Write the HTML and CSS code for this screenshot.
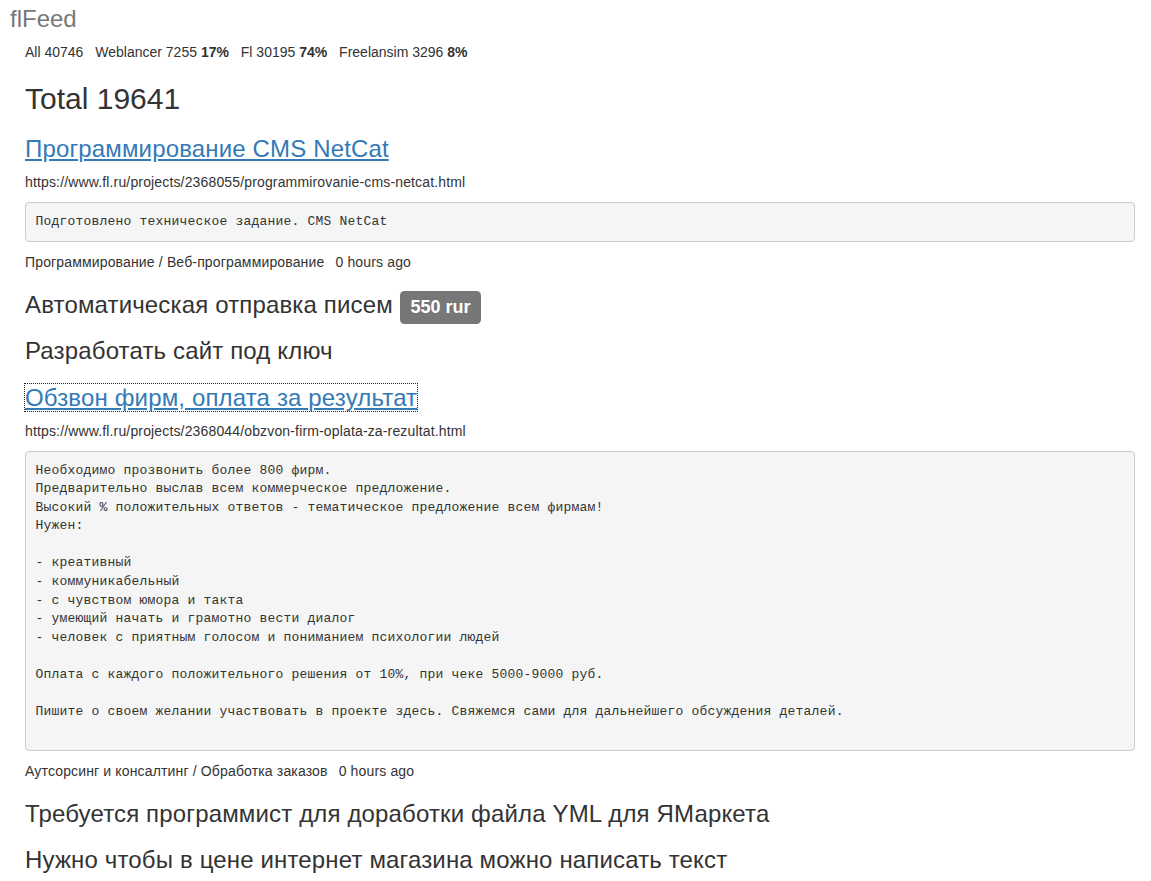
FILE: index.html
```html
<!DOCTYPE html>
<html lang="ru">
<head>
<meta charset="utf-8">
<title>flFeed</title>
<link rel="stylesheet" href="styles.css">
</head>
<body>
<header class="brand">flFeed</header>
<main class="page">
  <div class="stats">
    <span class="stat">All 40746</span>
    <span class="stat">Weblancer 7255 <b>17%</b></span>
    <span class="stat">Fl 30195 <b>74%</b></span>
    <span class="stat">Freelansim 3296 <b>8%</b></span>
  </div>
  <h2 class="total">Total 19641</h2>

  <article class="job">
    <h3 class="job-title"><a class="job-link" href="#">Программирование CMS NetCat</a></h3>
    <p class="job-url">https://www.fl.ru/projects/2368055/programmirovanie-cms-netcat.html</p>
    <pre class="job-desc">Подготовлено техническое задание. CMS NetCat</pre>
    <p class="job-meta"><span class="job-cat">Программирование / Веб-программирование</span><span class="job-time">0 hours ago</span></p>
  </article>

  <h3 class="job-title">Автоматическая отправка писем <span class="price">550 rur</span></h3>

  <h3 class="job-title">Разработать сайт под ключ</h3>

  <article class="job">
    <h3 class="job-title"><a class="job-link focused" href="#">Обзвон фирм, оплата за результат</a></h3>
    <p class="job-url">https://www.fl.ru/projects/2368044/obzvon-firm-oplata-za-rezultat.html</p>
    <pre class="job-desc">Необходимо прозвонить более 800 фирм.
Предварительно выслав всем коммерческое предложение.
Высокий % положительных ответов - тематическое предложение всем фирмам!
Нужен:

- креативный
- коммуникабельный
- с чувством юмора и такта
- умеющий начать и грамотно вести диалог
- человек с приятным голосом и пониманием психологии людей

Оплата с каждого положительного решения от 10%, при чеке 5000-9000 руб.

Пишите о своем желании участвовать в проекте здесь. Свяжемся сами для дальнейшего обсуждения деталей.

</pre>
    <p class="job-meta"><span class="job-cat">Аутсорсинг и консалтинг / Обработка заказов</span><span class="job-time">0 hours ago</span></p>
  </article>

  <h3 class="job-title">Требуется программист для доработки файла YML для ЯМаркета</h3>

  <h3 class="job-title">Нужно чтобы в цене интернет магазина можно написать текст</h3>
</main>
</body>
</html>
```

FILE: styles.css
```css
html, body {
  margin: 0;
  padding: 0;
}

body {
  font-family: "Liberation Sans", Arial, "Helvetica Neue", sans-serif;
  font-size: 14px;
  line-height: 1.42857;
  color: #333;
  background: #fff;
}

.brand {
  padding: 5px 10px 0;
  font-size: 24px;
  line-height: 27px;
  color: #777;
}

.page {
  padding: 0 16px 0 25px;
}

.stats {
  margin-top: 10px;
  line-height: 20px;
}

.stat {
  margin-right: 8px;
}

.stat b {
  font-weight: bold;
}

.total {
  margin: 20px 0 21px;
  font-size: 30px;
  font-weight: 500;
  line-height: 1.1;
}

.job-title {
  margin: 20px 0 10px;
  font-size: 24px;
  font-weight: 500;
  line-height: 1.1;
  letter-spacing: 0.15px;
}

.job-link {
  color: #337ab7;
  text-decoration: underline;
}

.job-link.focused {
  outline: 1px dotted #212121;
}

.job-url {
  margin: 0 0 10px;
  line-height: 20px;
  letter-spacing: 0.15px;
}

.job-desc {
  margin: 0 0 10px;
  padding: 9.5px;
  font-family: "Liberation Mono", "Courier New", monospace;
  font-size: 13px;
  line-height: 1.42857;
  letter-spacing: 0.2px;
  color: #333;
  background: #f5f5f5;
  border: 1px solid #ccc;
  border-radius: 4px;
  white-space: pre-wrap;
  word-break: break-all;
}

.job-meta {
  margin: 0 0 10px;
  line-height: 20px;
  letter-spacing: 0.15px;
}

.job-time {
  margin-left: 11px;
}

.price {
  display: inline;
  padding: 5.7px 10.8px 7.5px;
  font-size: 18px;
  font-weight: bold;
  line-height: 1;
  letter-spacing: 0;
  color: #fff;
  background: #777;
  border-radius: 4.5px;
  white-space: nowrap;
  vertical-align: baseline;
}
```
